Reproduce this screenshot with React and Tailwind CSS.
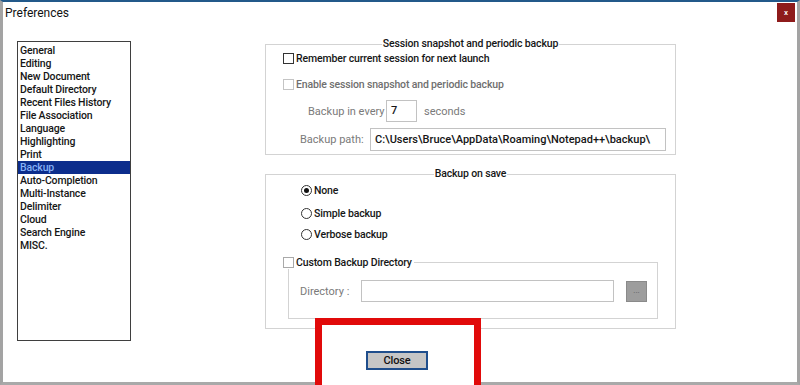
import React from 'react';

const categories = [
    'General', 'Editing', 'New Document', 'Default Directory', 'Recent Files History',
    'File Association', 'Language', 'Highlighting', 'Print', 'Backup',
    'Auto-Completion', 'Multi-Instance', 'Delimiter', 'Cloud', 'Search Engine', 'MISC.',
];

const Check = ({ disabled }) => (
    <span className={`block shrink-0 w-[11px] h-[11px] border bg-white ${disabled ? 'border-[#c4c4c4]' : 'border-[#333]'}`} />
);

const Radio = ({ checked }) => (
    <span className="flex shrink-0 items-center justify-center w-[11px] h-[11px] rounded-full border border-[#333] bg-white">
        {checked && <span className="block w-[5px] h-[5px] rounded-full bg-[#111]" />}
    </span>
);

const App = () => {
    return (
        <div className="relative w-[800px] h-[385px] overflow-hidden bg-white font-[Roboto,'Liberation_Sans',sans-serif] font-medium text-[10.5px] tracking-[-0.15px] leading-[13px] text-[#161616]">
            <div className="h-[385px] border-t-2 border-t-[#23598a] border-x-[3px] border-x-[#a3a3a3] border-b-[3px] border-b-[#a9a9a9]">
                {/* title bar */}
                <div className="flex items-start justify-between h-[39px]">
                    <span className="pl-[2px] pt-[4px] text-[12px] leading-[15px] tracking-normal font-normal text-[#111]">Preferences</span>
                    <div className="mt-[1px] mr-[2px] w-[18px] h-[19px] bg-[#8e1b1b] flex items-center justify-center text-white text-[8px] leading-none">x</div>
                </div>

                <div className="flex items-start">
                    {/* category list */}
                    <div className="ml-[14px] w-[114px] h-[300px] border border-[#3f3f3f] py-[2px]">
                        {categories.map((c) => (
                            <div
                                key={c}
                                className={`h-[13px] pl-[2px] whitespace-nowrap ${c === 'Backup' ? 'bg-[#0c2d8c] text-[#86b0f5]' : ''}`}
                            >
                                {c}
                            </div>
                        ))}
                    </div>

                    {/* settings pane */}
                    <div className="ml-[134px] -mt-[3px] w-[411px]">
                        <fieldset className="border border-[#d3d3d3] pb-[3px]">
                            <legend className="mx-auto px-[1px] leading-[12px]">Session snapshot and periodic backup</legend>
                            <div className="mt-[2px] h-[13px] flex items-center pl-[17px]">
                                <Check />
                                <span className="ml-[2px]">Remember current session for next launch</span>
                            </div>
                            <div className="mt-[13px] h-[13px] flex items-center pl-[17px] text-[#6f6f6f]">
                                <Check disabled />
                                <span className="ml-[2px]">Enable session snapshot and periodic backup</span>
                            </div>
                            <div className="mt-[9px] h-[22px] flex items-center pl-[42px] text-[11px] tracking-normal text-[#7a7a7a] font-normal">
                                <span className="w-[78px]">Backup in every</span>
                                <div className="w-[31px] h-[22px] border border-[#c2c2c2] pl-[4px] pt-[3px] text-[#161616] font-medium">7</div>
                                <span className="ml-[7px]">seconds</span>
                            </div>
                            <div className="mt-[6px] h-[23px] flex items-center pl-[34px] text-[11px] tracking-normal text-[#7a7a7a] font-normal">
                                <span className="w-[70px]">Backup path:</span>
                                <div className="w-[296px] h-[23px] border border-[#c2c2c2] pl-[4px] pt-[4px] text-[#161616] font-medium whitespace-nowrap">
                                    C:\Users\Bruce\AppData\Roaming\Notepad++\backup\
                                </div>
                            </div>
                        </fieldset>

                        <fieldset className="mt-[13px] border border-[#d3d3d3] pb-[9px]">
                            <legend className="mx-auto px-[1px] leading-[12px]">Backup on save</legend>
                            <div className="mt-[4px] h-[13px] flex items-center pl-[35px]">
                                <Radio checked />
                                <span className="ml-[2px]">None</span>
                            </div>
                            <div className="mt-[10px] h-[13px] flex items-center pl-[35px]">
                                <Radio />
                                <span className="ml-[2px]">Simple backup</span>
                            </div>
                            <div className="mt-[8px] h-[13px] flex items-center pl-[35px]">
                                <Radio />
                                <span className="ml-[2px]">Verbose backup</span>
                            </div>

                            <fieldset className="mt-[15px] ml-[22px] w-[370px] border border-[#d3d3d3] pb-[16px]">
                                <legend className="-ml-[6px] pr-[2px] h-[13px] flex items-center">
                                    <span className="block w-[11px] h-[11px] border border-[#a9a9a9] bg-white" />
                                    <span className="ml-[2px]">Custom Backup Directory</span>
                                </legend>
                                <div className="mt-[11px] flex items-center pl-[11px] text-[11px] tracking-normal text-[#7a7a7a] font-normal">
                                    <span className="w-[61px]">Directory :</span>
                                    <div className="w-[253px] h-[22px] border border-[#c2c2c2]" />
                                    <div className="ml-[12px] w-[21px] h-[21px] bg-[#9d9d9d] border border-[#8a8a8a] flex items-center justify-center text-[8px] leading-none text-[#5a5a5a]">...</div>
                                </div>
                            </fieldset>
                        </fieldset>
                    </div>
                </div>
            </div>

            {/* red annotation around the Close button */}
            <div className="absolute left-[315px] top-[318px] w-[166px] h-[80px] border-[7px] border-[#e10a0a] bg-white">
                <div className="mt-[26px] ml-[44px] w-[62px] h-[19px] border-2 border-[#1f4e8c] bg-[#c6c6c6] flex items-center justify-center text-[11px] text-[#111]">
                    Close
                </div>
            </div>
        </div>
    );
};

export default App;
